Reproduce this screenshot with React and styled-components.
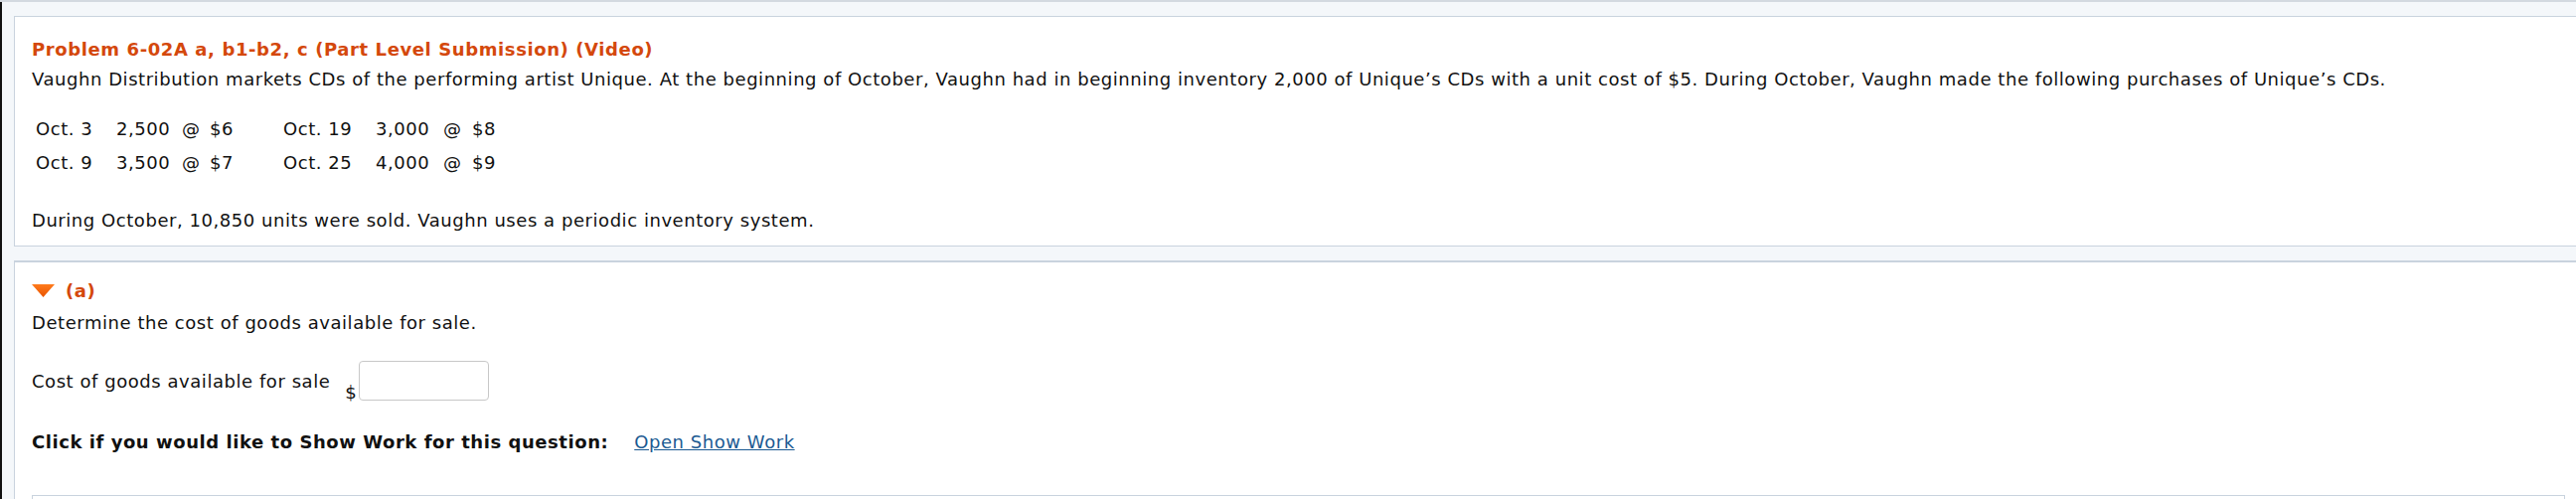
import styled, { createGlobalStyle } from 'styled-components';

// 全局
const GlobalStyle = createGlobalStyle`
  html, body {
    margin: 0;
    padding: 0;
    background: #f4f7fa;
    overflow: hidden;
  }
  body {
    font-family: 'DejaVu Sans', Verdana, sans-serif;
    font-size: 18px;
    letter-spacing: 0.55px;
    line-height: 23px;
    color: #111;
  }
`;

// 布局
const Page = styled.div`
  border-top: 2px solid #d3d9e0;
`;
const Frame = styled.div`
  border-left: 2px solid #111;
  padding: 14px 0 0 12px;
  min-height: 500px;
`;
const Card = styled.section`
  background: #fff;
  border: 1px solid #c9d3de;
  border-top-width: ${p => p.$top || 1}px;
  margin-right: -8px;
  margin-bottom: 14px;
  padding: ${p => p.$pad};
`;

// 文字
const Title = styled.h2`
  margin: 0 0 7px;
  font-size: 18px;
  font-weight: bold;
  letter-spacing: 0.6px;
  color: #d4480c;
`;
const Para = styled.p`
  margin: 0;
`;

// 進貨表
const Purchases = styled.div`
  display: grid;
  grid-template-columns: 81px 66px 28px 74px 93px 68px 29px auto;
  margin: 22px 0 29px 4px;
  width: max-content;
`;
const Cell = styled.span`
  height: 34px;
  line-height: 34px;
  white-space: pre;
`;

// (a) 部分
const PartHead = styled.div`
  display: flex;
  align-items: center;
  gap: 11px;
  margin-bottom: 9px;
  font-weight: bold;
  color: #d4480c;
`;
const FieldRow = styled.div`
  display: flex;
  align-items: center;
  margin: 27px 0 30px;
`;
const FieldLabel = styled.span`
  margin-right: 15px;
`;
const Dollar = styled.span`
  align-self: flex-end;
  line-height: 16px;
  margin-right: 2px;
`;
const Input = styled.input`
  box-sizing: border-box;
  width: 131px;
  height: 40px;
  border: 1px solid #c8c8c8;
  border-radius: 4px;
  font: inherit;
  outline: none;
`;
const ShowWork = styled.div`
  display: flex;
  align-items: center;
  gap: 26px;
  b {
    font-weight: bold;
  }
`;
const Link = styled.a`
  color: #1b5a92;
  text-decoration: underline;
  cursor: pointer;
`;
const NextBox = styled.div`
  margin-top: 42px;
  height: 40px;
  border: 1px solid #c9d3de;
`;

const rows = [
  ['Oct. 3', '2,500', '@', '$6', 'Oct. 19', '3,000', '@', '$8'],
  ['Oct. 9', '3,500', '@', '$7', 'Oct. 25', '4,000', '@', '$9'],
];

const Triangle = () => (
  <svg width="23" height="13" viewBox="0 0 23 13">
    <defs>
      <linearGradient id="tri" x1="0" y1="0" x2="0" y2="1">
        <stop offset="0" stopColor="#ff7b1c" />
        <stop offset="1" stopColor="#e85300" />
      </linearGradient>
    </defs>
    <polygon points="0,0 23,0 11.5,13" fill="url(#tri)" />
  </svg>
);

const App = () => (
  <Page>
    <GlobalStyle />
    <Frame>
      <Card $pad="21px 18px 14px 17px">
        <Title>Problem 6-02A a, b1-b2, c (Part Level Submission) (Video)</Title>
        <Para>
          Vaughn Distribution markets CDs of the performing artist Unique. At the beginning of October, Vaughn had in
          beginning inventory 2,000 of Unique’s CDs with a unit cost of $5. During October, Vaughn made the following
          purchases of Unique’s CDs.
        </Para>
        <Purchases>
          {rows.flat().map((t, i) => (
            <Cell key={i}>{t}</Cell>
          ))}
        </Purchases>
        <Para>During October, 10,850 units were sold. Vaughn uses a periodic inventory system.</Para>
      </Card>
      <Card $top={2} $pad="17px 18px 0 17px">
        <PartHead>
          <Triangle />
          (a)
        </PartHead>
        <Para>Determine the cost of goods available for sale.</Para>
        <FieldRow>
          <FieldLabel>Cost of goods available for sale</FieldLabel>
          <Dollar>$</Dollar>
          <Input type="text" />
        </FieldRow>
        <ShowWork>
          <b>Click if you would like to Show Work for this question:</b>
          <Link>Open Show Work</Link>
        </ShowWork>
        <NextBox />
      </Card>
    </Frame>
  </Page>
);

export default App;
